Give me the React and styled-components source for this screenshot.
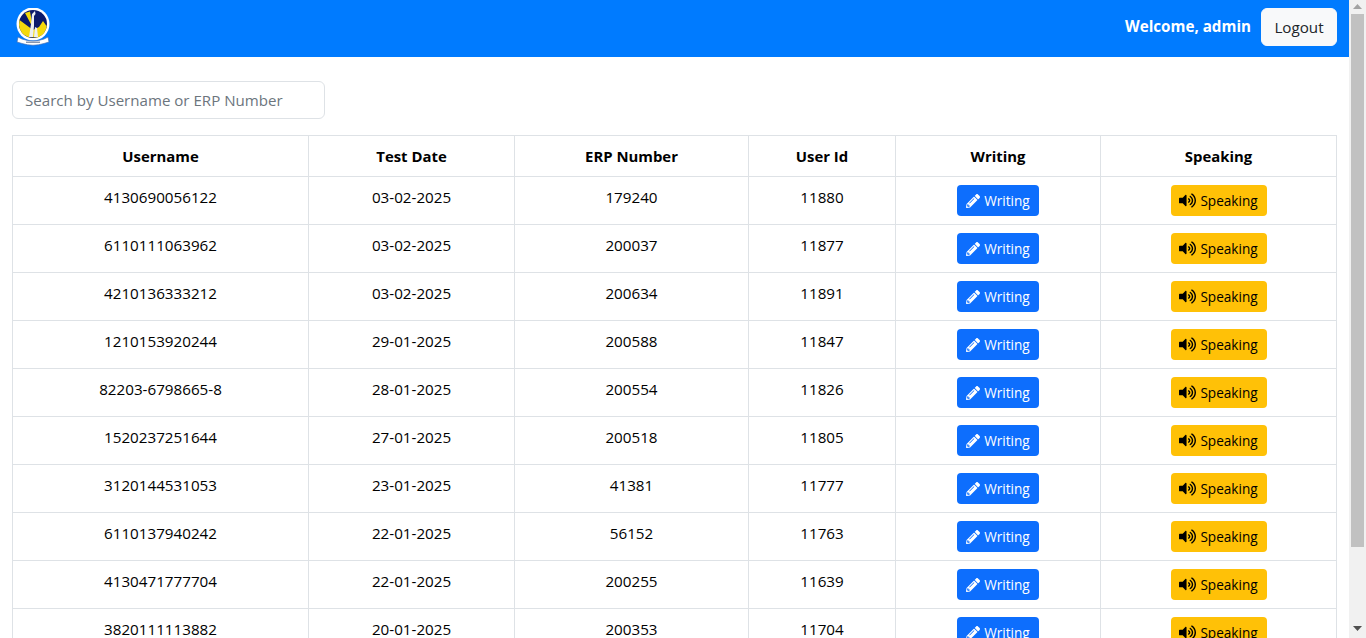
import React from "react"
import styled, { createGlobalStyle } from "styled-components"
import { FaPencilAlt, FaVolumeUp } from "react-icons/fa"

const Global = createGlobalStyle`
  html, body { height: 100%; overflow: hidden; }
  body {
    margin: 0;
    background: #fff;
    color: #000;
    font-family: "Open Sans", "Liberation Sans", sans-serif;
    font-size: 15.2px;
    line-height: 24px;
  }
  * { box-sizing: border-box; }
`

const Shell = styled.div`
  display: flex;
  height: 100vh;
  overflow: hidden;
`

const Page = styled.div`
  flex: 1;
  min-width: 0;
  overflow: hidden;
`

const ScrollBar = styled.aside`
  flex: none;
  display: flex;
  flex-direction: column;
  align-items: center;
  width: 17px;
  background: #f1f1f1;
`

const ScrollArrow = styled.svg`
  flex: none;
  display: block;
  margin: ${(p) => p.$margin};
`

const ScrollThumb = styled.div`
  flex: none;
  width: 13px;
  height: 533px;
  background: #c1c1c1;
`

const Navbar = styled.header`
  display: flex;
  align-items: flex-start;
  justify-content: space-between;
  height: 57px;
  padding: 8px 12px 0 16px;
  background: #007bff;
`

const UserArea = styled.div`
  display: flex;
  align-items: center;
  gap: 10px;
`

const Welcome = styled.span`
  color: #fff;
  font-weight: 700;
  font-size: 15.2px;
  margin-top: -3px;
`

const LogoutButton = styled.button`
  width: 76px;
  height: 38px;
  padding: 0;
  border: 1px solid #f8f9fa;
  border-radius: 6px;
  background: #f8f9fa;
  color: #212529;
  font: inherit;
`

const Main = styled.main`
  padding: 24px 12px 16px;
`

const SearchInput = styled.input`
  display: block;
  width: 313px;
  height: 38px;
  padding: 6px 12px;
  margin-bottom: 16px;
  border: 1px solid #dee2e6;
  border-radius: 6px;
  color: #212529;
  font: inherit;
  font-size: 15.1px;
  &::placeholder { color: #6c757d; opacity: 1; }
`

const Table = styled.table`
  width: 1324px;
  table-layout: fixed;
  border-collapse: collapse;
  text-align: center;
`

const HeadCell = styled.th`
  width: ${(p) => p.$width}px;
  padding: 8px;
  border: 1px solid #dee2e6;
  font-weight: 700;
  font-size: 14.9px;
`

const Cell = styled.td`
  padding: 8px;
  border: 1px solid #dee2e6;
  vertical-align: top;
`

const ActionButton = styled.button`
  display: inline-flex;
  align-items: center;
  justify-content: center;
  gap: 4px;
  width: ${(p) => p.$width}px;
  height: 31px;
  padding: 0;
  border: 0;
  border-radius: 4px;
  background: ${(p) => p.$bg};
  color: ${(p) => p.$fg};
  font: inherit;
  font-size: 13.6px;
  vertical-align: top;
  svg { flex: none; }
`

const columns = [
  ["Username", 296],
  ["Test Date", 206],
  ["ERP Number", 234],
  ["User Id", 147],
  ["Writing", 205],
  ["Speaking", 236],
]

const rows = [
  ["4130690056122", "03-02-2025", "179240", "11880"],
  ["6110111063962", "03-02-2025", "200037", "11877"],
  ["4210136333212", "03-02-2025", "200634", "11891"],
  ["1210153920244", "29-01-2025", "200588", "11847"],
  ["82203-6798665-8", "28-01-2025", "200554", "11826"],
  ["1520237251644", "27-01-2025", "200518", "11805"],
  ["3120144531053", "23-01-2025", "41381", "11777"],
  ["6110137940242", "22-01-2025", "56152", "11763"],
  ["4130471777704", "22-01-2025", "200255", "11639"],
  ["3820111113882", "20-01-2025", "200353", "11704"],
]

// college crest, two white cranes on a navy and yellow sunburst
const Logo = () => (
  <svg width="34" height="38" viewBox="0 0 34 38">
    <circle cx="17" cy="16" r="16.500" fill="#fff" />
    <circle cx="17" cy="16" r="14" fill="#0b1a6b" />
    <path d="M17 22L3.500 12 3 17Q4 26 12 29L22 29.500Q30 26 31 17L30.500 18 27 13 23 19Z" fill="#f4d90c" />
    <path d="M17 20L9 5 14 3.500Z" fill="#f4d90c" />
    <path d="M13 29L15 16 16 6 19 3 19.500 6 18 8 18 18 17 29Z" fill="#eceff2" />
    <path d="M18 29L19 19 21 20 22 29Z" fill="#eceff2" />
    <path d="M2 29L6 31Q17 35 28 31L32 29 33 34 28 35.500Q17 39 6 35.500L1 34Z" fill="#fff" stroke="#3f6fb8" strokeWidth=".7" />
    <path d="M10 34.200H24" stroke="#55678c" strokeWidth="1" />
  </svg>
)

const App = () => (
  <>
    <Global />
    <Shell>
      <Page>
        <Navbar>
          <Logo />
          <UserArea>
            <Welcome>Welcome, admin</Welcome>
            <LogoutButton>Logout</LogoutButton>
          </UserArea>
        </Navbar>
        <Main>
          <SearchInput placeholder="Search by Username or ERP Number" />
          <Table>
            <thead>
              <tr>
                {columns.map(([label, width]) => (
                  <HeadCell key={label} $width={width}>{label}</HeadCell>
                ))}
              </tr>
            </thead>
            <tbody>
              {rows.map((row) => (
                <tr key={row[0]}>
                  {row.map((value, i) => <Cell key={i}>{value}</Cell>)}
                  <Cell>
                    <ActionButton $width={82} $bg="#0d6efd" $fg="#fff">
                      <FaPencilAlt size={14} /> Writing
                    </ActionButton>
                  </Cell>
                  <Cell>
                    <ActionButton $width={96} $bg="#ffc107" $fg="#000">
                      <FaVolumeUp size={17} /> Speaking
                    </ActionButton>
                  </Cell>
                </tr>
              ))}
            </tbody>
          </Table>
        </Main>
      </Page>
      <ScrollBar>
        <ScrollArrow width="9" height="5" viewBox="0 0 9 5" $margin="4px 0 5px">
          <path d="M4.500 0L9 5H0z" fill="#a3a3a3" />
        </ScrollArrow>
        <ScrollThumb />
        <ScrollArrow width="9" height="5" viewBox="0 0 9 5" $margin="79px 0 0">
          <path d="M0 0H9L4.500 5z" fill="#505050" />
        </ScrollArrow>
      </ScrollBar>
    </Shell>
  </>
)

export default App
